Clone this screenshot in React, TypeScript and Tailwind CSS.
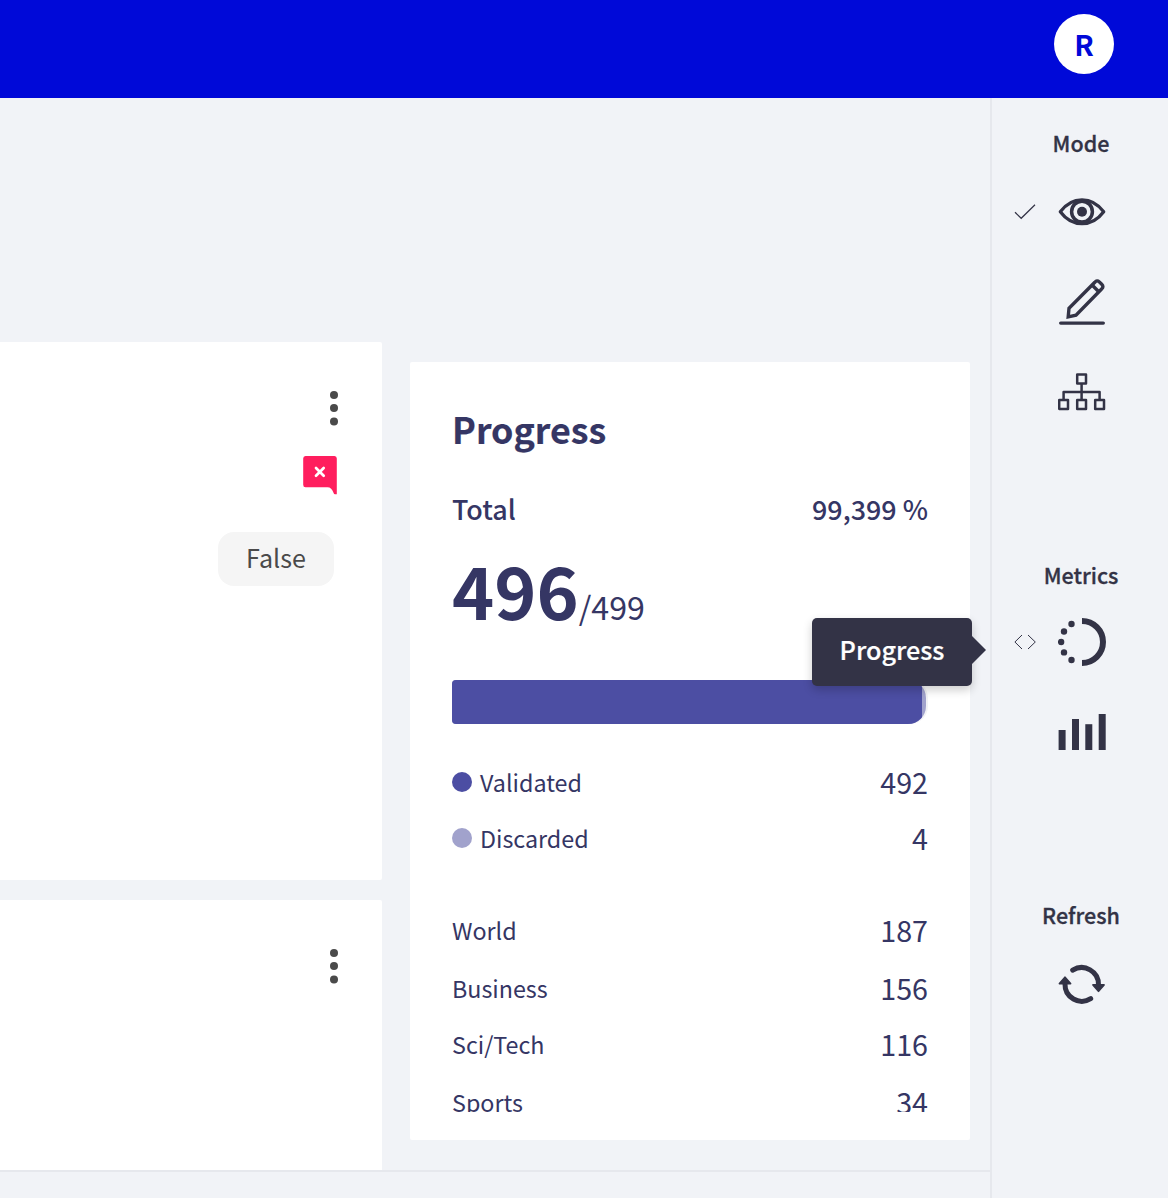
import React from "react";

const INK = "#333346";

function EyeIcon() {
  return (
    <svg width="48" height="48" viewBox="0 0 48 48" fill="none" stroke={INK}>
      <path d="M2.300 23.700C7.500 16.700 15.500 11.800 24 11.800s16.500 4.900 21.700 11.900C40.500 30.700 32.500 35.600 24 35.600S7.500 30.700 2.300 23.700Z" strokeWidth="3.300" strokeLinejoin="round" />
      <circle cx="24" cy="23.700" r="10.400" strokeWidth="3.500" />
      <circle cx="24" cy="23.700" r="5" fill={INK} stroke="none" />
    </svg>
  );
}

function PencilIcon() {
  return (
    <svg width="48" height="48" viewBox="0 0 48 48" fill="none" stroke={INK} strokeWidth="3.400">
      <path d="M10.200 38.800L11 30.200L36.800 4.300Q39 1.700 41.300 3.900L43.700 6.300Q46 8.700 43.600 11L18 37.200Z" />
      <path d="M33.800 6.800L41.300 14.200" />
      <path d="M2.700 45.100H45.300" strokeLinecap="round" />
    </svg>
  );
}

function TreeIcon() {
  return (
    <svg width="48" height="48" viewBox="0 0 48 48" fill="none" stroke={INK} strokeWidth="2.500" strokeLinejoin="round">
      <rect x="19.200" y="6.600" width="8.800" height="8.800" />
      <rect x="1.200" y="32.100" width="8.800" height="8.800" />
      <rect x="19.200" y="32.100" width="8.800" height="8.800" />
      <rect x="37.200" y="32.100" width="8.800" height="8.800" />
      <path d="M23.600 15.500V32M5.600 32V24H41.600V32" />
    </svg>
  );
}

function ProgressIcon() {
  return (
    <svg width="48" height="48" viewBox="0 0 48 48" fill={INK}>
      <path d="M24 3a21 21 0 0 1 0 42" fill="none" stroke={INK} strokeWidth="6" />
      <circle cx="13.500" cy="6" r="3.200" />
      <circle cx="6" cy="13.500" r="3.200" />
      <circle cx="3.100" cy="24" r="3.200" />
      <circle cx="6" cy="34.400" r="3.200" />
      <circle cx="13.500" cy="42" r="3.200" />
    </svg>
  );
}

function BarsIcon() {
  return (
    <svg width="48" height="48" viewBox="0 0 48 48" fill={INK}>
      <rect x="0.600" y="22" width="7" height="20" />
      <rect x="14" y="11" width="7" height="31" />
      <rect x="27.300" y="16.200" width="7" height="25.800" />
      <rect x="40.700" y="6" width="7" height="36" />
    </svg>
  );
}

function RefreshIcon() {
  return (
    <svg width="48" height="48" viewBox="0 0 48 48" fill="none" stroke={INK} strokeWidth="5" strokeLinecap="round">
      <path d="M14.700 10.200A16.800 16.800 0 0 1 40.500 25" />
      <path d="M32.700 38.700A16.800 16.800 0 0 1 7 24" />
      <path d="M35 25H46L40.500 31.200Z" fill={INK} strokeWidth="1.800" strokeLinejoin="round" />
      <path d="M1.500 23.600H12.500L7 17.300Z" fill={INK} strokeWidth="1.800" strokeLinejoin="round" />
    </svg>
  );
}

function CheckMark() {
  return (
    <svg width="22" height="16" viewBox="0 0 22 16" fill="none" stroke={INK} strokeWidth="1.200">
      <path d="M1 8.300L7.200 14.300L21 0.800" />
    </svg>
  );
}

function AngleMarks() {
  return (
    <svg width="22" height="16" viewBox="0 0 22 16" fill="none" stroke={INK} strokeWidth="1">
      <path d="M8 1L0.900 8L8 15M14 1L21.300 8L14 15" />
    </svg>
  );
}

function Kebab() {
  return (
    <svg width="8" height="36" viewBox="0 0 8 36" fill="#4a4a4a">
      <circle cx="4" cy="4.900" r="4" />
      <circle cx="4" cy="18" r="4" />
      <circle cx="4" cy="31.400" r="4" />
    </svg>
  );
}

function RejectedFlag() {
  return (
    <svg width="34" height="39" viewBox="0 0 34 39">
      <path d="M2.500 0H31.500Q33.800 0 33.800 2.500V38.300H32Q31 38.300 30.500 36.800Q28.700 31.200 24.500 31.200H2.500Q0.200 31.200 0.200 28.700V2.500Q0.200 0 2.500 0Z" fill="#ff1e5e" />
      <path d="M13 12L20.700 19.700M20.700 12L13 19.700" stroke="#fff" strokeWidth="2.700" strokeLinecap="round" />
    </svg>
  );
}

function SideItem({ icon, marker }: { icon: React.ReactNode; marker?: React.ReactNode }) {
  return (
    <div className="flex h-12 items-center gap-[22px] pl-[22px]">
      <div className="w-[22px] shrink-0">{marker}</div>
      {icon}
    </div>
  );
}

function SideTitle({ children }: { children: React.ReactNode }) {
  return (
    <h4 className="h-6 pl-[2px] text-center text-[21.500px] leading-6 font-medium [-webkit-text-stroke:0.3px_#333346]">
      {children}
    </h4>
  );
}

function StatRow({ label, value, dot, height }: { label: string; value: string; dot?: string; height: string }) {
  return (
    <div className={"flex items-start justify-between " + height}>
      <div className="flex items-center text-[23.300px] leading-[40px]">
        {dot && <span className={"mr-2 size-5 rounded-full " + dot} />}
        {label}
      </div>
      <div className="text-[28.700px] leading-[40px]">{value}</div>
    </div>
  );
}

const labels = [
  { label: "World", value: "187", height: "h-[58px]" },
  { label: "Business", value: "156", height: "h-[56px]" },
  { label: "Sci/Tech", value: "116", height: "h-[58px]" },
  { label: "Sports", value: "34", height: "h-[58px]" },
];

export default function App() {
  return (
    <div className="flex h-[1198px] w-[1168px] flex-col overflow-hidden bg-[#f1f3f7] font-['Noto_Sans_CJK_SC',sans-serif] whitespace-nowrap text-[#333346]">
      <header className="flex h-[98px] shrink-0 justify-end bg-[#0009d8] pt-[14px] pr-[54px]">
        <div className="flex size-[60px] items-center justify-center rounded-full bg-white text-[28.700px] leading-[60px] font-bold text-[#0009d8]">R</div>
      </header>

      <div className="flex min-h-0 flex-1">
        <main className="flex w-[990px] flex-col">
          <div className="flex h-[1072px] gap-7 overflow-hidden">
            <section className="flex w-[382px] flex-col gap-5 pt-[244px]">
              <article className="flex h-[538px] shrink-0 flex-col items-end rounded-r-[2px] bg-white pt-12">
                <div className="mr-11"><Kebab /></div>
                <div className="mt-[30px] mr-[45px]"><RejectedFlag /></div>
                <div className="mt-[37px] mr-12 flex h-[54px] w-[116px] items-center justify-center rounded-[16px] bg-[#f5f5f5] pb-[4px] text-[25.100px] leading-[50px] text-[#4a4a4a]">False</div>
              </article>
              <article className="flex h-[290px] shrink-0 flex-col items-end rounded-tr-[2px] bg-white pt-12">
                <div className="mr-11"><Kebab /></div>
              </article>
            </section>

            <aside className="mt-[264px] h-[778px] w-[560px] rounded-[2px] bg-white px-[42px] pt-[46px] text-[#353664]">
              <h2 className="h-[40px] text-[35.800px] leading-[40px] font-bold [-webkit-text-stroke:0.2px_#353664]">Progress</h2>
              <div className="mt-[41px] flex h-[40px] justify-between text-[26.900px] leading-[40px] font-medium">
                <span>Total</span>
                <span>99,399 %</span>
              </div>
              <div className="mt-[18px] flex h-[84px] items-baseline leading-[84px]">
                <span className="text-[71.600px] font-bold">496</span>
                <span className="text-[32.200px]">/499</span>
              </div>
              <div className="mt-[49px] h-[44px] w-[476px] rounded-l-[4px] rounded-r-[18px] bg-[#f2f2f5]">
                <div className="flex h-full w-[474px] overflow-hidden rounded-l-[4px] rounded-r-[18px] bg-[#a1a2cc]">
                  <div className="w-[470px] bg-[#4c4ea3]" />
                </div>
              </div>
              <div className="mt-[38px] h-[350px] overflow-hidden">
                <StatRow label="Validated" value="492" dot="bg-[#4c4ea3]" height="h-[56px]" />
                <StatRow label="Discarded" value="4" dot="bg-[#a1a2cc]" height="h-[92px]" />
                {labels.map((l) => (
                  <StatRow key={l.label} {...l} />
                ))}
              </div>
            </aside>
          </div>
          <div className="h-[2px] shrink-0 bg-[#e6e8ed]" />
        </main>

        <nav className="relative flex w-[178px] flex-col border-l-2 border-[#e6e8ed] pt-[33px]">
          <SideTitle>Mode</SideTitle>
          <div className="mt-[33px] flex flex-col gap-[42px]">
            <SideItem icon={<EyeIcon />} marker={<CheckMark />} />
            <SideItem icon={<PencilIcon />} />
            <SideItem icon={<TreeIcon />} />
          </div>
          <div className="mt-[147px]"><SideTitle>Metrics</SideTitle></div>
          <div className="mt-[31px] flex flex-col gap-[42px]">
            <SideItem icon={<ProgressIcon />} marker={<AngleMarks />} />
            <SideItem icon={<BarsIcon />} />
          </div>
          <div className="mt-[147px]"><SideTitle>Refresh</SideTitle></div>
          <div className="mt-[33px]">
            <SideItem icon={<RefreshIcon />} />
          </div>

          <div role="tooltip" className="absolute top-[520px] -left-[180px] flex h-[68px] w-[160px] items-center justify-center rounded-[5px] bg-[#333346] pb-[6px] text-[25.200px] leading-[62px] font-medium text-white shadow-[0_4px_10px_rgba(0,0,0,0.2)] [-webkit-text-stroke:0.2px_#fff]">
            Progress
            <span className="absolute top-[18px] left-full h-0 w-0 border-y-[14px] border-l-[14px] border-y-transparent border-l-[#333346]" />
          </div>
        </nav>
      </div>
    </div>
  );
}
